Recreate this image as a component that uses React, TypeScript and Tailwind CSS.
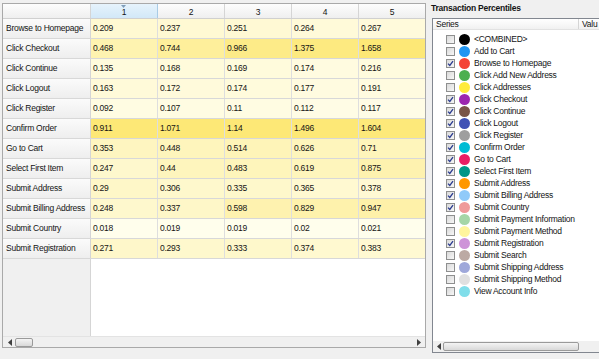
import React from "react"

const rows: [string, number[]][] = [
    ["Browse to Homepage", [0.209, 0.237, 0.251, 0.264, 0.267]],
    ["Click Checkout", [0.468, 0.744, 0.966, 1.375, 1.658]],
    ["Click Continue", [0.135, 0.168, 0.169, 0.174, 0.216]],
    ["Click Logout", [0.163, 0.172, 0.174, 0.177, 0.191]],
    ["Click Register", [0.092, 0.107, 0.11, 0.112, 0.117]],
    ["Confirm Order", [0.911, 1.071, 1.14, 1.496, 1.604]],
    ["Go to Cart", [0.353, 0.448, 0.514, 0.626, 0.71]],
    ["Select First Item", [0.247, 0.44, 0.483, 0.619, 0.875]],
    ["Submit Address", [0.29, 0.306, 0.335, 0.365, 0.378]],
    ["Submit Billing Address", [0.248, 0.337, 0.598, 0.829, 0.947]],
    ["Submit Country", [0.018, 0.019, 0.019, 0.02, 0.021]],
    ["Submit Registration", [0.271, 0.293, 0.333, 0.374, 0.383]]
]

const series: [string, string, boolean][] = [
    ["<COMBINED>", "#000000", false],
    ["Add to Cart", "#2196f3", false],
    ["Browse to Homepage", "#f44336", true],
    ["Click Add New Address", "#4caf50", false],
    ["Click Addresses", "#ffeb3b", false],
    ["Click Checkout", "#9c27b0", true],
    ["Click Continue", "#795548", true],
    ["Click Logout", "#3f51b5", true],
    ["Click Register", "#9e9e9e", true],
    ["Confirm Order", "#00bcd4", true],
    ["Go to Cart", "#e91e63", true],
    ["Select First Item", "#009688", true],
    ["Submit Address", "#ff9800", true],
    ["Submit Billing Address", "#90caf9", true],
    ["Submit Country", "#ef9a9a", true],
    ["Submit Payment Information", "#a5d6a7", false],
    ["Submit Payment Method", "#fff59d", false],
    ["Submit Registration", "#ce93d8", true],
    ["Submit Search", "#bcaaa4", false],
    ["Submit Shipping Address", "#9fa8da", false],
    ["Submit Shipping Method", "#e0e0e0", false],
    ["View Account Info", "#80deea", false]
]

const colMax = [0, 1, 2, 3, 4].map((i) => Math.max(...rows.map((r) => r[1][i])))

// light cream -> saturated yellow, scaled per column
function heat(v: number, i: number) {
    const t = v / colMax[i]
    const lo = [255, 254, 238]
    const hi = [253, 232, 118]
    const c = lo.map((l, k) => Math.round(l + (hi[k] - l) * t))
    return `rgb(${c[0]},${c[1]},${c[2]})`
}

function Arrow({ dir }: { dir: "l" | "r" }) {
    return (
        <svg width="4" height="7" viewBox="0 0 4 7">
            {dir === "l" ? (
                <path d="M4 0 L0 3.5 L4 7 Z" fill="#404040" />
            ) : (
                <path d="M0 0 L4 3.5 L0 7 Z" fill="#404040" />
            )}
        </svg>
    )
}

function CheckBox({ on }: { on: boolean }) {
    return (
        <div className="flex h-[9px] w-[9px] shrink-0 items-center justify-center border border-[#8e8f8f] bg-gradient-to-br from-[#d9d9d9] to-[#f7f7f7]">
            {on ? (
                <svg width="7" height="7" viewBox="0 0 7 7">
                    <path d="M1 3.6 L2.8 5.4 L6 1.2" fill="none" stroke="#2a3b8f" strokeWidth="1.3" />
                </svg>
            ) : null}
        </div>
    )
}

export default function App() {
    return (
        <div className="flex h-[359px] w-[599px] overflow-hidden bg-[#f0f0f0] font-['Liberation_Sans',Arial,sans-serif] text-[8.5px] tracking-[-0.25px] text-[#141414]">
            {/* grid panel */}
            <div className="ml-[2px] mt-[3px] flex h-[345px] w-[424px] shrink-0 flex-col overflow-hidden border border-[#a9a9a9] bg-white">
                <div className="flex h-[15px] shrink-0 border-b border-[#d0d0d0] bg-gradient-to-b from-[#fdfdfd] to-[#efefef]">
                    <div className="w-[88px] shrink-0 border-r border-[#d5d5d5]" />
                    {["1", "2", "3", "4", "5"].map((c, i) => (
                        <div
                            key={c}
                            className={
                                i === 0
                                    ? "relative flex w-[67px] shrink-0 items-center justify-center border-r border-[#a8cbe6] bg-gradient-to-b from-[#e6f3fc] to-[#d2e8f8]"
                                    : "flex w-[67px] shrink-0 items-center justify-center border-r border-[#d5d5d5]"
                            }
                        >
                            {i === 0 ? (
                                <svg className="absolute left-[30px] top-[1px]" width="5" height="3" viewBox="0 0 5 3">
                                    <path d="M0 0 L5 0 L2.5 3 Z" fill="#7f9db9" />
                                </svg>
                            ) : null}
                            <span className="pt-[2px]">{c}</span>
                        </div>
                    ))}
                </div>

                {rows.map(([label, vals]) => (
                    <div key={label} className="flex h-[20px] shrink-0 border-b border-[#d8d8d8]">
                        <div className="flex w-[88px] shrink-0 items-center whitespace-nowrap border-r border-[#d5d5d5] bg-gradient-to-b from-[#fbfbfb] to-[#eeeeee] pl-[3px]">
                            {label}
                        </div>
                        {vals.map((v, i) => (
                            <div
                                key={i}
                                className="flex w-[67px] shrink-0 items-center border-r border-[#dedede] pl-[2px]"
                                style={{ backgroundColor: heat(v, i) }}
                            >
                                {v}
                            </div>
                        ))}
                    </div>
                ))}

                <div className="flex flex-1">
                    <div className="w-[88px] shrink-0 border-r border-[#d5d5d5] bg-[#f0f0f0]" />
                    <div className="flex-1 bg-white" />
                </div>

                <div className="flex h-[11px] shrink-0 items-center border-t border-[#e3e3e3] bg-[#f0f0f0]">
                    <div className="flex w-[11px] justify-center pl-[2px]">
                        <Arrow dir="l" />
                    </div>
                    <div className="ml-[1px] h-[9px] w-[18px] rounded-[2px] border border-[#9a9a9a] bg-gradient-to-b from-[#f4f4f4] to-[#d9d9d9]" />
                    <div className="flex-1" />
                    <div className="flex w-[11px] justify-center pr-[2px]">
                        <Arrow dir="r" />
                    </div>
                </div>
            </div>

            {/* series panel */}
            <div className="ml-[2px] flex w-[180px] shrink-0 flex-col">
                <div className="flex h-[18px] items-center whitespace-nowrap pb-[2px] pl-[3px] text-[8.5px] font-bold">
                    Transaction Percentiles
                </div>
                <div className="ml-[4px] flex h-[335px] w-[180px] flex-col border border-[#828790] bg-white">
                    <div className="flex h-[11px] shrink-0 border-b border-[#e2e2e2] bg-gradient-to-b from-white to-[#f1f1f1]">
                        <div className="flex w-[146px] items-center border-r border-[#d5d5d5] pl-[3px]">
                            Series
                        </div>
                        <div className="flex items-center pl-[3px]">Valu</div>
                    </div>
                    <div className="flex flex-1 flex-col pt-[3px]">
                        {series.map(([name, color, on]) => (
                            <div key={name} className="flex h-[12px] shrink-0 items-center">
                                <div className="ml-[13px]">
                                    <CheckBox on={on} />
                                </div>
                                <div
                                    className="ml-[4px] h-[11px] w-[11px] shrink-0 rounded-full"
                                    style={{ backgroundColor: color }}
                                />
                                <span className="ml-[4px] whitespace-nowrap">{name}</span>
                            </div>
                        ))}
                    </div>
                    <div className="flex h-[11px] shrink-0 items-center bg-[#f0f0f0]">
                        <div className="flex w-[9px] justify-center pl-[2px]">
                            <Arrow dir="l" />
                        </div>
                        <div className="ml-[1px] h-[9px] w-[136px] rounded-[2px] border border-[#9a9a9a] bg-gradient-to-b from-[#f4f4f4] to-[#d9d9d9]" />
                        <div className="flex-1" />
                        <div className="flex w-[21px] justify-start pl-[11px]">
                            <Arrow dir="r" />
                        </div>
                    </div>
                </div>
            </div>
        </div>
    )
}
